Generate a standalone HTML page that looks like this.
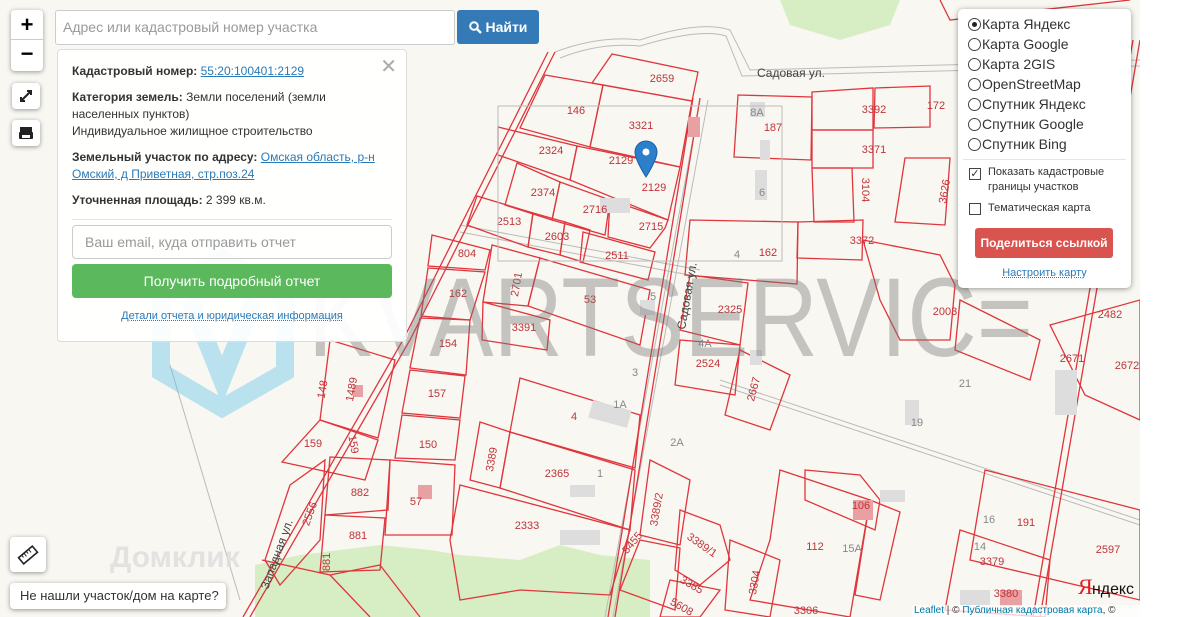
<!DOCTYPE html>
<html><head><meta charset="utf-8">
<style>
*{box-sizing:border-box}
body{margin:0;width:1194px;height:617px;overflow:hidden;background:#fff;font-family:"Liberation Sans",sans-serif;position:relative}
#map{position:absolute;left:0;top:0;width:1140px;height:617px;background:#f8f7f1;overflow:hidden}
.ctl{position:absolute;background:#fff;border-radius:4px;box-shadow:0 1px 5px rgba(0,0,0,.4)}
.panel{position:absolute;left:57px;top:49px;width:350px;height:293px;background:rgba(255,255,255,.93);border:1px solid #ddd;border-radius:4px;font-size:12px;color:#333;padding:13px 14px}
.panel p{margin:0 0 9px;line-height:17px}
.panel a{color:#2a7ab8;text-decoration:underline}
.lay{position:absolute;left:958px;top:9px;width:173px;height:279px;background:#fff;border-radius:5px;box-shadow:0 1px 6px rgba(0,0,0,.4);font-size:14px;color:#333}
.r{position:absolute;left:10px;height:20px;line-height:20px}
.r i{display:inline-block;width:13px;height:13px;border:1px solid #444;border-radius:50%;vertical-align:-2px;margin-right:1px;position:relative}
</style></head><body>
<div id="map">
<svg width="1140" height="617" style="position:absolute;left:0;top:0" font-family="Liberation Sans" font-size="11" fill="#c0333a">
<path d="M780 0 L900 0 L890 25 L840 40 L790 25Z" fill="#d7eec5"/>
<path d="M255 565 L300 555 L380 545 L430 550 L460 555 L520 560 L560 545 L600 555 L650 560 L650 617 L255 617Z" fill="#d7eec5"/>
<g fill="none" stroke="#bbb" stroke-width="1">
<path d="M555 52 Q600 35 640 40 Q700 20 730 30 L750 70 L1140 60"/>
<path d="M560 58 Q600 42 640 46 Q700 28 726 36 L742 76 L1140 66"/>
<path d="M700 100 L605 617 M708 100 L613 617"/>
<path d="M720 380 L1140 520 M720 385 L1140 525"/>
<path d="M460 225 L700 270 M460 232 L700 277"/>
<path d="M170 365 L240 600"/>
</g>
<g fill="none" stroke="#e0353c" stroke-width="1.3">
<path d="M555 52 L410 340 L250 617 M548 52 L403 340 L243 617"/>
<path d="M693 98 L608 617 M700 98 L615 617"/>
<path d="M1140 40 L1040 617 M1133 40 L1033 617"/>
<path d="M612 54 L698 72 L692 101 L592 83Z"/>
<path d="M545 75 L603 85 L590 147 L520 128Z"/>
<path d="M603 85 L692 101 L680 167 L590 147Z"/>
<path d="M498 127 L577 146 L570 180 L498 155Z"/>
<path d="M577 146 L680 167 L668 220 L570 180Z"/>
<path d="M517 163 L560 182 L552 220 L505 205Z"/>
<path d="M560 182 L610 200 L605 235 L552 220Z"/>
<path d="M610 200 L668 220 L665 228 L650 248 L608 237Z"/>
<path d="M477 196 L533 213 L528 247 L467 225Z"/>
<path d="M533 213 L565 222 L560 255 L528 247Z"/>
<path d="M565 222 L590 230 L583 262 L560 255Z"/>
<path d="M583 232 L655 252 L648 280 L580 262Z"/>
<path d="M432 235 L490 250 L485 270 L428 266Z"/>
<path d="M428 268 L485 272 L470 320 L421 316Z"/>
<path d="M492 245 L540 258 L528 306 L483 302Z"/>
<path d="M540 258 L650 290 L640 345 L528 306Z"/>
<path d="M483 302 L550 320 L547 350 L482 340Z"/>
<path d="M420 318 L470 320 L466 375 L410 368Z"/>
<path d="M410 370 L465 376 L460 418 L402 413Z"/>
<path d="M402 415 L460 420 L455 460 L395 458Z"/>
<path d="M330 340 L395 360 L378 438 L320 420Z"/>
<path d="M320 420 L378 440 L365 480 L282 462Z"/>
<path d="M520 378 L640 415 L635 468 L510 432Z"/>
<path d="M480 422 L510 432 L500 488 L470 480Z"/>
<path d="M510 432 L635 470 L630 530 L500 488Z"/>
<path d="M460 485 L630 530 L610 595 L520 590 L460 600 L450 540Z"/>
<path d="M330 457 L390 460 L388 510 L325 515Z"/>
<path d="M390 460 L455 465 L452 535 L385 535Z"/>
<path d="M325 515 L385 518 L380 570 L320 572Z"/>
<path d="M290 485 L325 460 L320 540 L280 585 L265 560Z"/>
<path d="M262 560 L330 575 L370 617 M330 575 L380 565 L420 617"/>
<path d="M650 460 L690 480 L680 545 L640 535Z"/>
<path d="M640 540 L680 548 L675 610 L620 590Z"/>
<path d="M680 510 L720 525 L730 560 L700 585 L675 570Z"/>
<path d="M670 580 L720 590 L700 617 L660 617Z"/>
<path d="M730 540 L780 560 L770 617 L725 610Z"/>
<path d="M780 470 L870 500 L850 617 L750 600 L770 540Z"/>
<path d="M805 470 L860 475 L880 500 L875 530 L805 500Z"/>
<path d="M870 500 L900 512 L880 600 L855 595Z"/>
<path d="M738 95 L812 97 L811 160 L734 157Z"/>
<path d="M812 92 L873 88 L873 130 L812 130Z"/>
<path d="M875 88 L930 86 L930 127 L874 128Z"/>
<path d="M812 130 L873 130 L873 168 L812 168Z"/>
<path d="M812 168 L852 168 L854 222 L814 222Z"/>
<path d="M905 158 L950 158 L945 225 L895 222Z"/>
<path d="M690 220 L798 222 L797 284 L685 275Z"/>
<path d="M798 222 L863 220 L862 260 L797 258Z"/>
<path d="M863 240 L940 255 L955 285 L950 340 L900 340 L880 300Z"/>
<path d="M690 275 L748 283 L740 345 L680 330Z"/>
<path d="M680 340 L740 345 L735 395 L675 385Z"/>
<path d="M740 350 L790 375 L770 430 L725 415Z"/>
<path d="M960 300 L1040 340 L1030 380 L955 350Z"/>
<path d="M1050 325 L1140 300 L1140 420 L1085 395Z"/>
<path d="M985 470 L1140 510 L1140 600 L970 560Z"/>
<path d="M960 530 L1050 560 L1045 617 L945 610Z"/>
<path d="M940 0 L950 20 L1130 0"/>
</g>
<g fill="#ddd">
<rect x="590" y="405" width="40" height="18" transform="rotate(15 610 414)"/>
<rect x="1055" y="370" width="22" height="45"/><rect x="640" y="300" width="15" height="15"/>
<rect x="570" y="485" width="25" height="12"/><rect x="750" y="350" width="12" height="15"/>
<rect x="560" y="530" width="40" height="15"/><rect x="905" y="400" width="14" height="25"/>
<rect x="760" y="140" width="10" height="20"/><rect x="755" y="170" width="12" height="30"/>
<rect x="880" y="490" width="25" height="12"/><rect x="960" y="590" width="30" height="15"/>
<rect x="600" y="198" width="30" height="15"/><rect x="750" y="102" width="15" height="15"/>
</g>
<g fill="#e9a0a3"><rect x="688" y="117" width="12" height="20"/><rect x="418" y="485" width="14" height="14"/><rect x="853" y="500" width="20" height="20"/><rect x="1000" y="590" width="22" height="16"/><rect x="353" y="385" width="10" height="12"/><rect x="115" y="590" width="14" height="12"/></g>
<g text-anchor="middle">
<text x="662" y="82">2659</text><text x="576" y="114">146</text><text x="641" y="129">3321</text>
<text x="551" y="154">2324</text><text x="621" y="164">2129</text><text x="654" y="191">2129</text>
<text x="543" y="196">2374</text><text x="595" y="213">2716</text><text x="651" y="230">2715</text>
<text x="509" y="225">2513</text><text x="557" y="240">2603</text><text x="617" y="259">2511</text>
<text x="467" y="257">804</text><text x="458" y="297">162</text><text x="590" y="303">53</text>
<text x="524" y="331">3391</text><text x="448" y="347">154</text><text x="437" y="397">157</text>
<text x="428" y="448">150</text><text x="313" y="447">159</text><text x="574" y="420">4</text>
<text x="557" y="477">2365</text><text x="527" y="529">2333</text><text x="360" y="496">882</text>
<text x="416" y="505">57</text><text x="358" y="539">881</text>
<text x="773" y="131">187</text><text x="874" y="113">3392</text><text x="936" y="109">172</text>
<text x="874" y="153">3371</text><text x="768" y="256">162</text><text x="862" y="244">3372</text>
<text x="730" y="313">2325</text><text x="708" y="367">2524</text><text x="945" y="315">2003</text>
<text x="1110" y="318">2482</text><text x="1072" y="362">2671</text><text x="1127" y="369">2672</text>
<text x="1026" y="526">191</text><text x="1108" y="553">2597</text><text x="992" y="565">3379</text>
<text x="1006" y="597">3380</text><text x="815" y="550">112</text><text x="861" y="509">106</text>
<text x="806" y="614">3306</text>
</g>
<g fill="#888" text-anchor="middle"><text x="757" y="116">8A</text><text x="762" y="196">6</text><text x="737" y="258">4</text><text x="653" y="300">5</text><text x="705" y="347">4A</text><text x="635" y="376">3</text><text x="620" y="408">1A</text><text x="677" y="446">2A</text><text x="600" y="477">1</text><text x="965" y="387">21</text><text x="917" y="426">19</text><text x="989" y="523">16</text><text x="980" y="550">14</text><text x="852" y="552">15A</text></g>
<g fill="#c0333a" text-anchor="middle">
<text transform="translate(520 285) rotate(-80)">2701</text><text transform="translate(862 190) rotate(90)">3104</text>
<text transform="translate(948 192) rotate(-80)">3626</text><text transform="translate(757 390) rotate(-75)">2667</text>
<text transform="translate(495 460) rotate(-80)">3389</text><text transform="translate(326 390) rotate(-80)">148</text>
<text transform="translate(355 390) rotate(-80)">1489</text><text transform="translate(350 445) rotate(80)">159</text>
<text transform="translate(313 515) rotate(-70)">2556</text><text transform="translate(330 562) rotate(-90)">881</text>
<text transform="translate(660 510) rotate(-80)">3389/2</text><text transform="translate(700 548) rotate(35)">3389/1</text>
<text transform="translate(635 545) rotate(-50)">5455</text><text transform="translate(758 583) rotate(-80)">3304</text>
<text transform="translate(690 588) rotate(30)">3385</text><text transform="translate(680 610) rotate(30)">5608</text>
</g>
<g fill="#444" font-size="12"><text x="757" y="77">Садовая ул.</text><text transform="translate(685 330) rotate(-80)">Садовая ул.</text><text transform="translate(268 590) rotate(-70)">Западная ул.</text></g>
<rect x="498" y="106" width="284" height="155" fill="none" stroke="#bbb"/>
<path d="M646 141 a11 11 0 0 1 11 11 c0 8 -11 25 -11 25 c0 0 -11 -17 -11 -25 a11 11 0 0 1 11 -11z" fill="#2b7fcb" stroke="#1d5f9f"/>
<circle cx="646" cy="152" r="3.5" fill="#fff"/>
<path d="M222 258 L285 295 L285 372 L222 408 L161 372 L161 295Z M190 300 L222 380 L254 300" fill="none" stroke="#5bc0eb" stroke-width="18" opacity=".4"/>
<text x="308" y="356" font-size="112" fill="#777" opacity=".4" textLength="725" lengthAdjust="spacingAndGlyphs">KVARTSERVIC=</text>
<text x="110" y="567" font-size="30" fill="#ddd" font-weight="bold" opacity=".8">Домклик</text>
<text x="1078" y="594" font-size="22" fill="#e21d24" font-family="Liberation Serif">Я</text><text x="1092" y="594" font-size="16" fill="#111" textLength="42" lengthAdjust="spacingAndGlyphs">ндекс</text>
</svg>
<div style="position:absolute;left:912px;top:605px;width:228px;height:12px;background:rgba(255,255,255,.75);font-size:10px;color:#333;line-height:12px;padding-left:2px;white-space:nowrap;overflow:hidden"><span style="color:#0078a8">Leaflet</span> | © <span style="color:#0078a8">Публичная кадастровая карта</span>, ©</div>
</div>

<div class="ctl" style="left:11px;top:10px;width:32px;height:61px">
<div style="height:30px;border-bottom:1px solid #ccc;text-align:center;font-size:22px;line-height:30px;font-weight:bold">+</div>
<div style="text-align:center;font-size:22px;line-height:28px;font-weight:bold">−</div></div>
<div class="ctl" style="left:12px;top:83px;width:28px;height:26px"><svg width="28" height="26"><path d="M9 18 L19 8 M15 8 L19 8 L19 12 M9 14 L9 18 L13 18" stroke="#222" stroke-width="2" fill="none"/></svg></div>
<div class="ctl" style="left:12px;top:120px;width:28px;height:26px"><svg width="28" height="26"><rect x="8" y="7" width="12" height="6" fill="#222"/><rect x="7" y="12" width="14" height="7" rx="1" fill="#222"/><rect x="10" y="15" width="8" height="3" fill="#fff"/></svg></div>
<div class="ctl" style="left:10px;top:537px;width:36px;height:35px"><svg width="36" height="35"><g transform="rotate(-40 18 18)"><rect x="9" y="14" width="18" height="8" fill="none" stroke="#222" stroke-width="1.6"/><path d="M13 14v3M16 14v4M19 14v3M22 14v4" stroke="#222"/></g></svg></div>
<div class="ctl" style="left:10px;top:583px;width:216px;height:26px;font-size:13px;color:#333;line-height:26px;padding-left:10px;white-space:nowrap">Не нашли участок/дом на карте?</div>

<div style="position:absolute;left:55px;top:10px;width:400px;height:35px;background:#fff;border:1px solid #ccc;border-radius:3px;font-size:14px;color:#999;line-height:33px;padding-left:7px">Адрес или кадастровый номер участка</div>
<div style="position:absolute;left:457px;top:10px;width:82px;height:34px;background:#337ab7;border-radius:3px;color:#fff;font-size:14px;font-weight:bold;line-height:34px;text-align:center"><svg width="13" height="13" style="vertical-align:-2px"><circle cx="5" cy="5" r="3.8" stroke="#fff" stroke-width="2" fill="none"/><path d="M8 8l4 4" stroke="#fff" stroke-width="2.4"/></svg> Найти</div>

<div class="panel">
<div style="position:absolute;right:9px;top:4px;font-size:20px;color:#aaa">✕</div>
<p><b>Кадастровый номер:</b> <a>55:20:100401:2129</a></p>
<p><b>Категория земель:</b> Земли поселений (земли населенных пунктов)<br>Индивидуальное жилищное строительство</p>
<p><b>Земельный участок по адресу:</b> <a>Омская область, р-н Омский, д Приветная, стр.поз.24</a></p>
<p><b>Уточненная площадь:</b> 2 399 кв.м.</p>
<div style="border-top:1px solid #e5e5e5;margin-top:10px;padding-top:5px"></div>
<div style="height:34px;border:1px solid #ccc;border-radius:4px;font-size:14px;color:#999;line-height:32px;padding-left:12px">Ваш email, куда отправить отчет</div>
<div style="height:34px;margin-top:5px;background:#5cb85c;border-radius:4px;color:#fff;font-size:14px;line-height:34px;text-align:center">Получить подробный отчет</div>
<div style="text-align:center;margin-top:12px;font-size:11px;color:#2a7ab8;text-decoration:underline dotted">Детали отчета и юридическая информация</div>
</div>

<div class="lay">
<div class="r" style="top:5px"><i><b style="position:absolute;left:3px;top:3px;width:5px;height:5px;border-radius:50%;background:#222"></b></i>Карта Яндекс</div>
<div class="r" style="top:25px"><i></i>Карта Google</div>
<div class="r" style="top:45px"><i></i>Карта 2GIS</div>
<div class="r" style="top:65px"><i></i>OpenStreetMap</div>
<div class="r" style="top:85px"><i></i>Спутник Яндекс</div>
<div class="r" style="top:105px"><i></i>Спутник Google</div>
<div class="r" style="top:125px"><i></i>Спутник Bing</div>
<div style="position:absolute;left:5px;right:5px;top:150px;border-top:1px solid #e5e5e5"></div>
<div style="position:absolute;left:11px;top:159px;width:12px;height:12px;border:1px solid #444;font-size:11px;line-height:10px;text-align:center">✓</div>
<div style="position:absolute;left:30px;top:156px;font-size:11px;line-height:15px;color:#333">Показать кадастровые<br>границы участков</div>
<div style="position:absolute;left:11px;top:194px;width:12px;height:12px;border:1px solid #444"></div>
<div style="position:absolute;left:30px;top:193px;font-size:11px;color:#333">Тематическая карта</div>
<div style="position:absolute;left:17px;top:219px;width:138px;height:30px;background:#d9534f;border-radius:3px;color:#fff;font-size:12px;font-weight:bold;line-height:30px;text-align:center">Поделиться ссылкой</div>
<div style="position:absolute;left:0;right:0;top:258px;text-align:center;font-size:11px;color:#2a7ab8;text-decoration:underline dotted">Настроить карту</div>
</div>
</body></html>
